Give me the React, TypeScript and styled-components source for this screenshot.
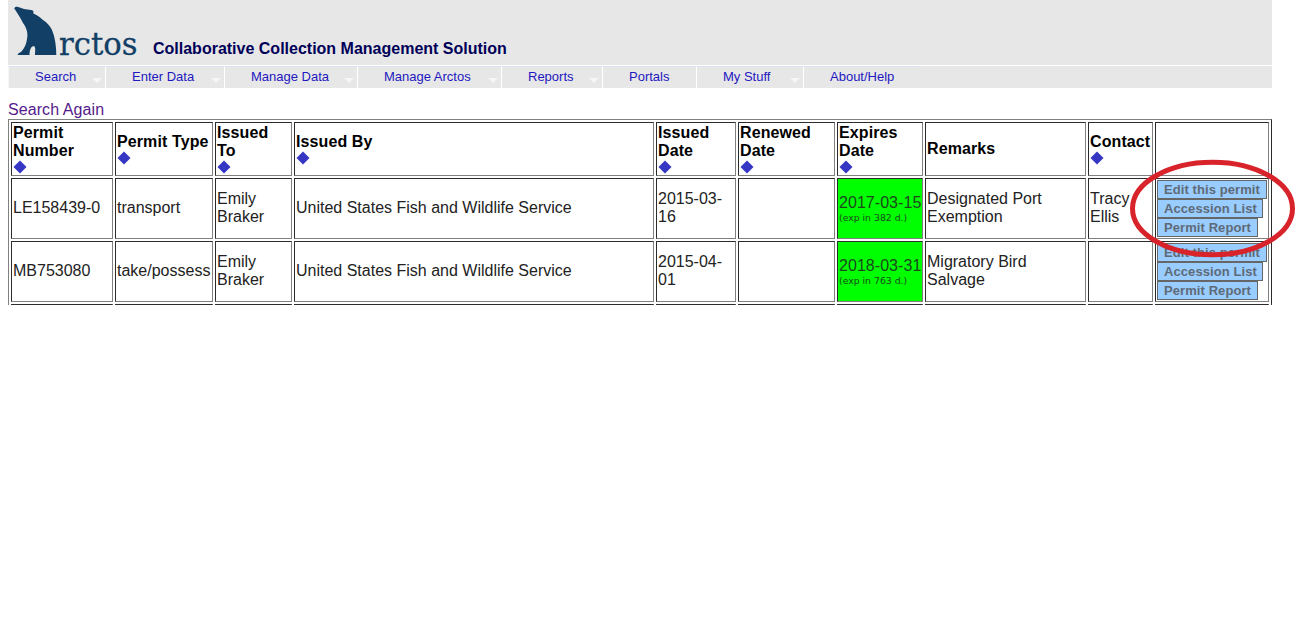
import React from 'react';
import styled, { createGlobalStyle } from 'styled-components';

const Global = createGlobalStyle`
  body { margin: 0; background: #fff; font-family: "Liberation Sans", Arial, sans-serif; color: #222; }
`;
const Page = styled.div`position: relative; width: 1299px; height: 635px; overflow: hidden;`;
const Content = styled.div`width: 1264px; margin-left: 8px;`;
const Header = styled.header`
  height: 65px; background: #e7e7e7; display: flex; align-items: flex-start;
`;
const Logo = styled.svg`display: block; width: 140px; height: 64px; flex: none; overflow: visible;`;
const Tagline = styled.div`
  margin: 40px 0 0 5px; font-weight: bold; font-size: 16px; line-height: 18px; color: #000058; white-space: nowrap;
`;
const Nav = styled.nav`
  height: 22px; border-top: 1px solid #fff; background: #e7e7e7; display: flex;
`;
const NavItem = styled.a<{ $w: number; $last?: boolean }>`
  position: relative; box-sizing: border-box; width: ${p => p.$w}px; height: 22px;
  border-top: 1px solid #d9e1f2; border-right: ${p => (p.$last ? 'none' : '1px solid #fff')};
  padding-left: 26px; font-size: 13px; line-height: 19px; color: #2318c0; white-space: nowrap;
  &:first-child { border-left: 1px solid #f6f6f6; }
`;
const Caret = styled.span`
  position: absolute; right: 3px; top: 11px; border: 5px solid transparent; border-top-color: #f6f6f6; border-bottom: 0;
`;
const Again = styled.a`
  display: block; margin-top: 12px; height: 19px; line-height: 19px; font-size: 16px; letter-spacing: 0.08px; color: #551a8b;
`;
const TableClip = styled.div`height: 186px; overflow: hidden;`;
const Table = styled.table`
  table-layout: fixed; width: 1264px; border-collapse: separate; border-spacing: 2px;
  border: 1px solid; border-color: #808080 #2c2c2c #2c2c2c #808080; font-size: 16px; line-height: 18px;
`;
const Row = styled.tr<{ $h: number }>`height: ${p => p.$h}px;`;
const BaseCell = styled.td`
  box-sizing: border-box; padding: 1px; border: 1px solid; border-color: #2c2c2c #808080 #808080 #2c2c2c;
  vertical-align: middle; text-align: left; white-space: nowrap;
`;
const Cell = styled(BaseCell)<{ $green?: boolean }>`
  padding-bottom: ${p => (p.$green ? 1 : 2)}px; background: ${p => (p.$green ? '#00ff00' : 'transparent')};
  letter-spacing: ${p => (p.$green ? '0.05px' : 'normal')}; color: ${p => (p.$green ? '#1c481c' : 'inherit')};
`;
const HeadCell = styled(BaseCell)`font-weight: bold; color: #000; letter-spacing: 0.1px;`;
const Sort = styled.svg`display: block; width: 14px; height: 14px;`;
const Small = styled.div`font: 9.3px/12px "DejaVu Sans", sans-serif; letter-spacing: 0; color: #1c481c;`;
const Actions = styled.div`display: flex; flex-direction: column; align-items: flex-start;`;
const Action = styled.button<{ $w: number }>`
  box-sizing: border-box; width: ${p => p.$w}px; height: 19px; padding: 0 0 0 6px; border: 1px solid #666;
  background: #99ccff; color: #5f6a76; font: bold 13px/16px "Liberation Sans", sans-serif; letter-spacing: 0.08px;
  text-align: left; white-space: nowrap;
`;
const Ring = styled.svg`position: absolute; left: 1125px; top: 155px; width: 174px; height: 108px;`;

const nav: [string, number, boolean][] = [
  ['Search', 98, true], ['Enter Data', 119, true], ['Manage Data', 133, true], ['Manage Arctos', 144, true],
  ['Reports', 101, true], ['Portals', 94, false], ['My Stuff', 107, true], ['About/Help', 117, false],
];
const widths = [102, 98, 77, 360, 80, 97, 86, 161, 65, 114];
const heads: [string[], boolean][] = [
  [['Permit', 'Number'], true], [['Permit Type'], true], [['Issued', 'To'], true], [['Issued By'], true],
  [['Issued', 'Date'], true], [['Renewed', 'Date'], true], [['Expires', 'Date'], true], [['Remarks'], false],
  [['Contact'], true], [[], false],
];
const rows = [
  { cells: [['LE158439-0'], ['transport'], ['Emily', 'Braker'], ['United States Fish and Wildlife Service'], ['2015-03-', '16'], [], ['2017-03-15'], ['Designated Port', 'Exemption'], ['Tracy', 'Ellis']], exp: '(exp in 382 d.)' },
  { cells: [['MB753080'], ['take/possess'], ['Emily', 'Braker'], ['United States Fish and Wildlife Service'], ['2015-04-', '01'], [], ['2018-03-31'], ['Migratory Bird', 'Salvage'], []], exp: '(exp in 763 d.)' },
];
const Lines = ({ items }: { items: string[] }) => <>{items.map(t => <div key={t}>{t}</div>)}</>;

export default function App() {
  return (
    <Page>
      <Global />
      <Content>
        <Header>
          <Logo viewBox="8 0 140 64">
            <path fill="#123f66" d="M14.300 8.500 C14.500 7 16 6.500 17.500 6.800 L24 9 L31 10 C33 10 34 11.500 33.300 13.500 C37 15 40 17 43 20 C47 22.500 50 26 52 30 C55 37 56.300 46 56.300 55 L35 55 C35 51 36 48 34 46 C31 46 29.500 50 29.500 55 L17.500 55 C18 53 20 52.500 21.500 51.500 C24.500 48 26.500 44 27 39 C28.500 33 26 27 23 23 C21 19 18 14 14.300 8.500 Z" />
            <text x="59" y="55" fontSize="32.5" fill="#123f66" stroke="#123f66" strokeWidth="0.3" fontFamily="'DejaVu Serif', serif" textLength="78.500" lengthAdjust="spacingAndGlyphs">rctos</text>
          </Logo>
          <Tagline>Collaborative Collection Management Solution</Tagline>
        </Header>
        <Nav>
          {nav.map(([t, w, c], i) => <NavItem key={t} $w={w} $last={i === 7}>{t}{c && <Caret />}</NavItem>)}
        </Nav>
        <Again>Search Again</Again>
        <TableClip>
          <Table>
            <colgroup>{widths.map((w, i) => <col key={i} style={{ width: w }} />)}</colgroup>
            <tbody>
              <Row $h={54}>
                {heads.map(([l, s], i) => (
                  <HeadCell key={i} as="th">
                    <Lines items={l} />
                    {s && <Sort viewBox="0 0 14 14"><path d="M7 .5 13.500 7 7 13.500 .5 7Z" fill="#3636c4" /></Sort>}
                  </HeadCell>
                ))}
              </Row>
              {rows.map((r, n) => (
                <Row key={n} $h={61}>
                  {r.cells.map((c, i) => <Cell key={i} $green={i === 6}><Lines items={c} />{i === 6 && <Small>{r.exp}</Small>}</Cell>)}
                  <BaseCell><Actions><Action $w={110}>Edit this permit</Action><Action $w={106}>Accession List</Action><Action $w={101}>Permit Report</Action></Actions></BaseCell>
                </Row>
              ))}
              <Row $h={54}>{widths.map((_, i) => <BaseCell key={i} />)}</Row>
            </tbody>
          </Table>
        </TableClip>
      </Content>
      <Ring viewBox="1125 155 174 108"><ellipse cx="1212.500" cy="208.500" rx="80" ry="46.300" fill="none" stroke="#d8232a" strokeWidth="5" /></Ring>
    </Page>
  );
}
